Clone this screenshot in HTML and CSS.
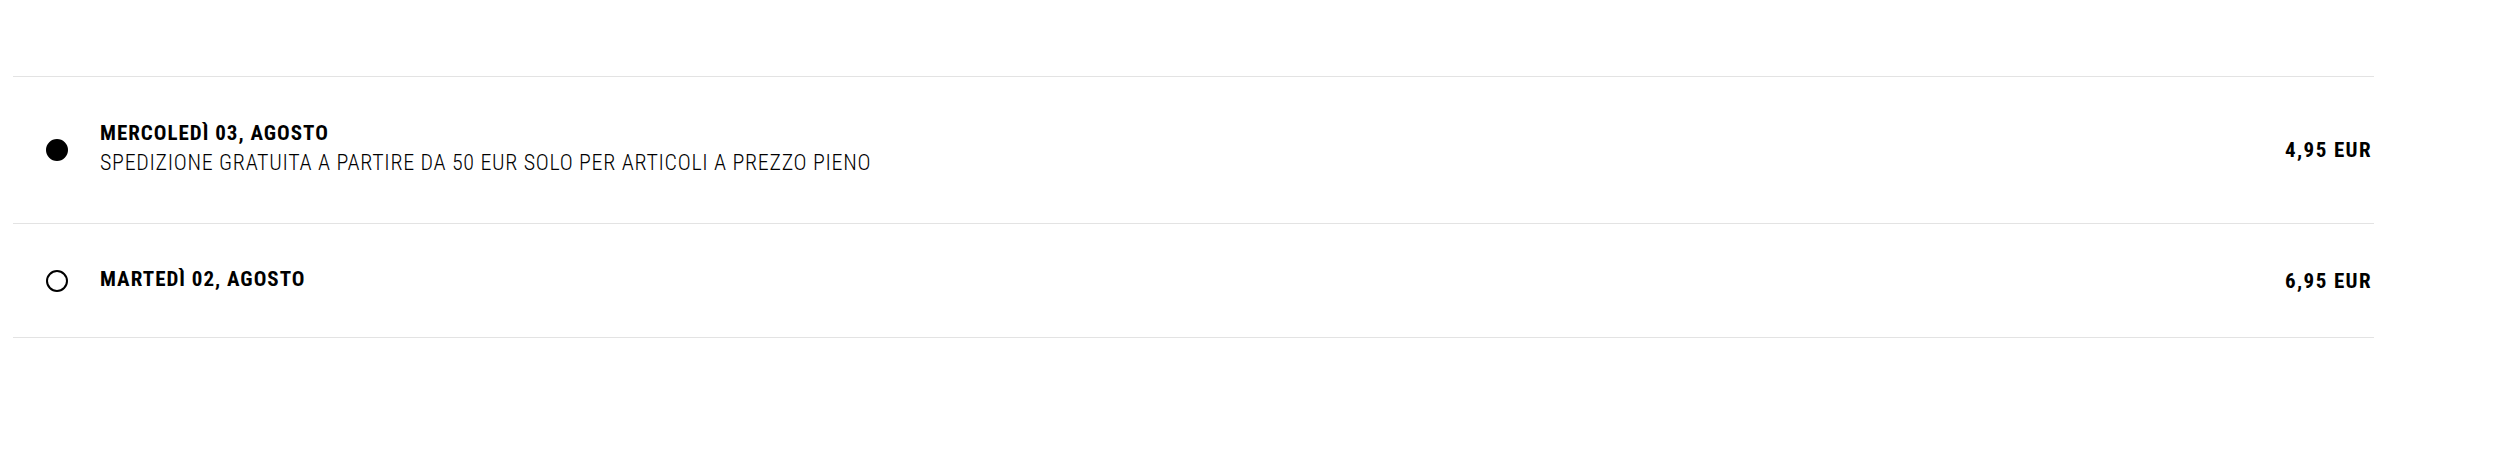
FILE: index.html
```html
<!DOCTYPE html>
<html lang="it">
<head>
<meta charset="utf-8">
<title>Spedizione</title>
<link rel="stylesheet" href="styles.css">
</head>
<body>
<div class="page">
  <ul class="options">
    <li class="option">
      <span class="radio radio--checked"></span>
      <div class="info">
        <div class="title">MERCOLEDÌ 03, AGOSTO</div>
        <div class="desc">SPEDIZIONE GRATUITA A PARTIRE DA 50 EUR SOLO PER ARTICOLI A PREZZO PIENO</div>
      </div>
      <div class="price">4,95 EUR</div>
    </li>
    <li class="option option--short">
      <span class="radio"></span>
      <div class="info">
        <div class="title">MARTEDÌ 02, AGOSTO</div>
      </div>
      <div class="price">6,95 EUR</div>
    </li>
  </ul>
</div>
</body>
</html>
```
FILE: styles.css
```css
html, body {
  margin: 0;
  padding: 0;
  background: #fff;
}
body {
  font-family: "Roboto Condensed", "Liberation Sans", sans-serif;
  color: #000;
}
.page {
  padding: 76px 0 0 13px;
  width: 2361px;
}
.options {
  list-style: none;
  margin: 0;
  padding: 0;
  border-top: 1px solid #e3e3e3;
}
.option {
  display: flex;
  align-items: center;
  height: 146px;
  border-bottom: 1px solid #e3e3e3;
  padding: 0 2px 0 33px;
}
.option--short {
  height: 113px;
}
.radio {
  flex: none;
  width: 22px;
  height: 22px;
  border-radius: 50%;
  box-sizing: border-box;
  border: 2px solid #000;
  margin-right: 32px;
}
.radio--checked {
  background: #000;
}
.info {
  flex: 1;
  display: flex;
  flex-direction: column;
  gap: 4px;
  margin-bottom: 4px;
}
.title {
  font-size: 21px;
  font-weight: 700;
  line-height: 26px;
  letter-spacing: 1px;
}
.desc {
  font-size: 22px;
  font-weight: 300;
  line-height: 26px;
  color: #000;
  letter-spacing: 0.7px;
}
.price {
  font-size: 21px;
  font-weight: 700;
  line-height: 26px;
  letter-spacing: 1.4px;
}
```
